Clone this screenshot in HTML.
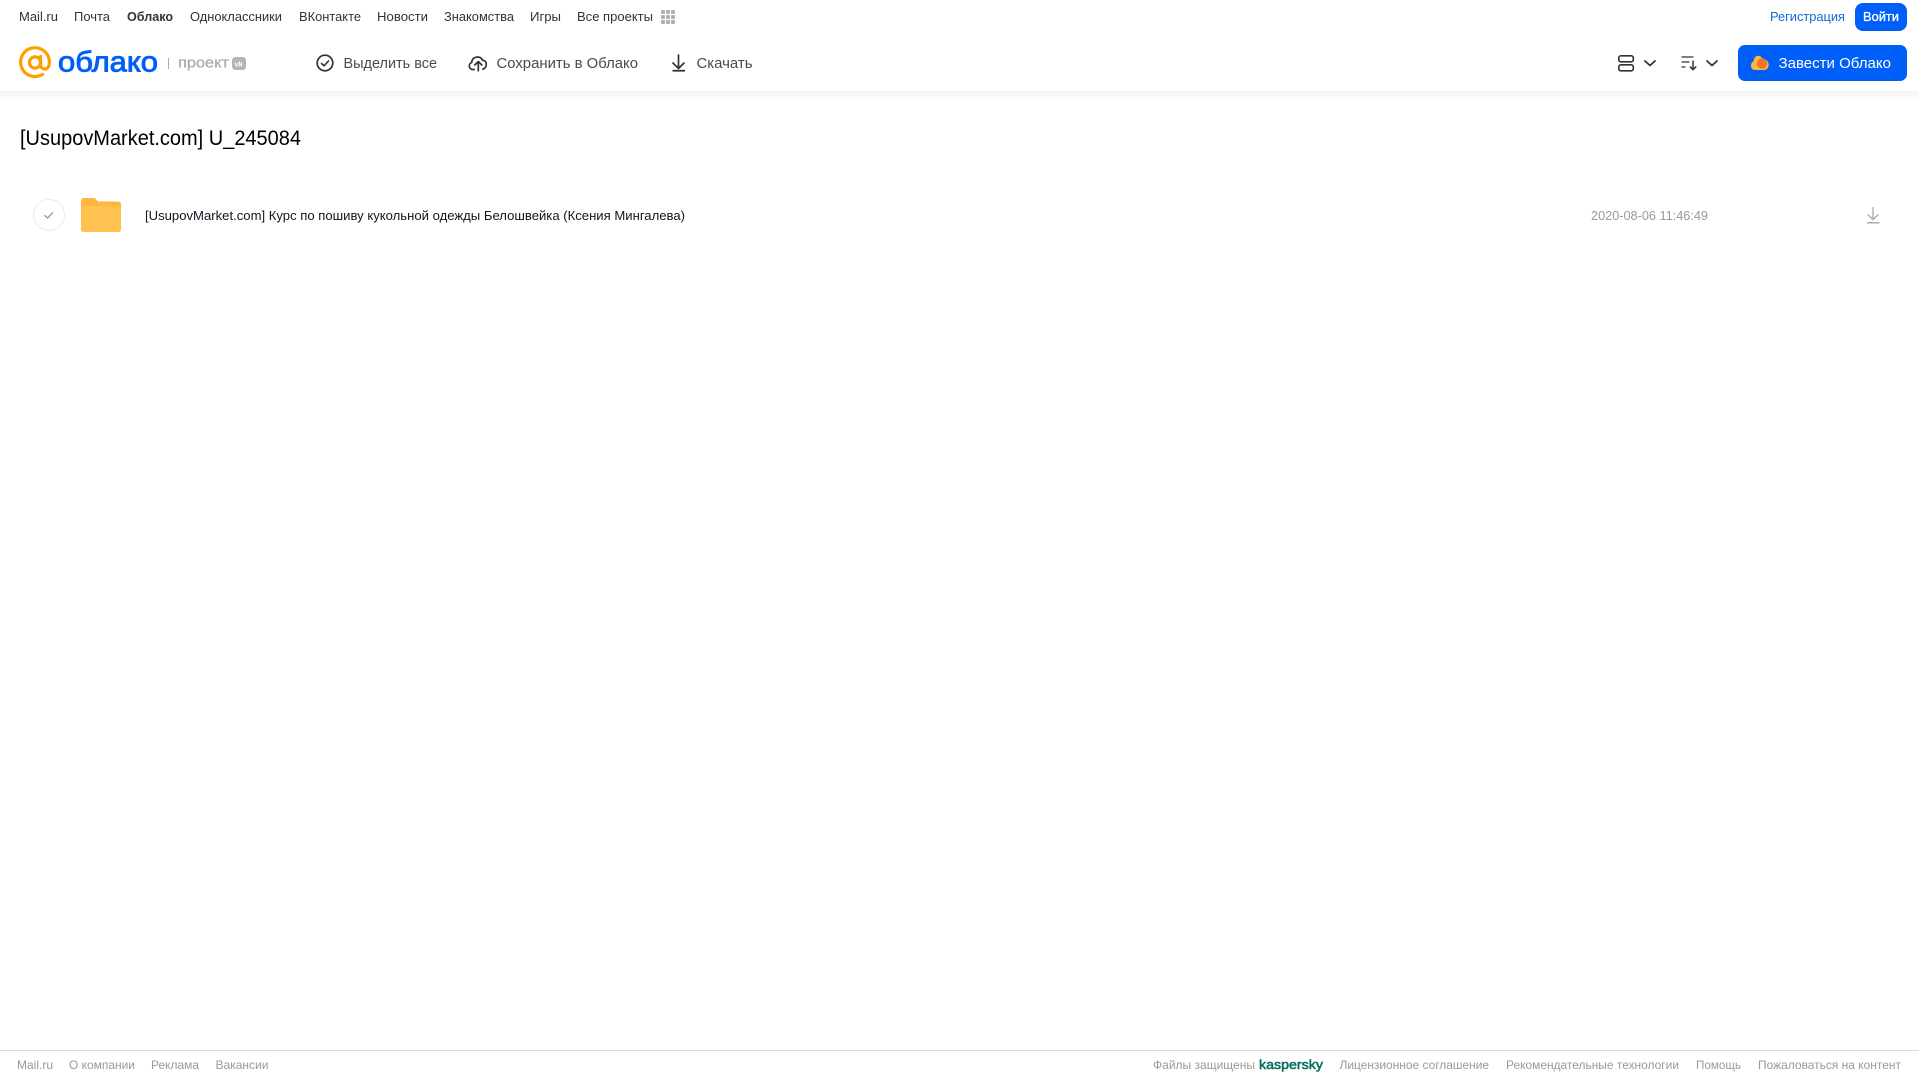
<!DOCTYPE html>
<html lang="ru"><head><meta charset="utf-8"><title>Облако</title>
<style>
html,body{margin:0;padding:0;background:#fff;width:1919px;height:1079px;overflow:hidden}
svg{display:block;font-family:"Liberation Sans",sans-serif}
.n{font-size:13px;fill:#333}
.t{font-size:14.5px;fill:#4a4a4a}
.f{font-size:12px;fill:#999}
</style></head><body>
<svg width="1919" height="1079" viewBox="0 0 1919 1079" xmlns="http://www.w3.org/2000/svg">
<defs><linearGradient id="s" x1="0" y1="0" x2="0" y2="1"><stop offset="0" stop-color="#f4f4f4"/><stop offset="1" stop-color="#fff"/></linearGradient></defs>
<rect x="0" y="91" width="1919" height="10" fill="url(#s)"/>

<!-- top nav -->
<text class="n" x="19" y="21" textLength="39" lengthAdjust="spacingAndGlyphs">Mail.ru</text>
<text class="n" x="74" y="21" textLength="36" lengthAdjust="spacingAndGlyphs">Почта</text>
<text class="n" x="127" y="21" textLength="46" lengthAdjust="spacingAndGlyphs" font-weight="700">Облако</text>
<text class="n" x="190" y="21" textLength="92" lengthAdjust="spacingAndGlyphs">Одноклассники</text>
<text class="n" x="299" y="21" textLength="62" lengthAdjust="spacingAndGlyphs">ВКонтакте</text>
<text class="n" x="377" y="21" textLength="51" lengthAdjust="spacingAndGlyphs">Новости</text>
<text class="n" x="444" y="21" textLength="70" lengthAdjust="spacingAndGlyphs">Знакомства</text>
<text class="n" x="530" y="21" textLength="31" lengthAdjust="spacingAndGlyphs">Игры</text>
<text class="n" x="577" y="21" textLength="76" lengthAdjust="spacingAndGlyphs">Все проекты</text>
<g fill="#b0b0b0">
<rect x="661" y="10" width="4" height="4" rx="1"/><rect x="666" y="10" width="4" height="4" rx="1"/><rect x="671" y="10" width="4" height="4" rx="1"/>
<rect x="661" y="15" width="4" height="4" rx="1"/><rect x="666" y="15" width="4" height="4" rx="1"/><rect x="671" y="15" width="4" height="4" rx="1"/>
<rect x="661" y="20" width="4" height="4" rx="1"/><rect x="666" y="20" width="4" height="4" rx="1"/><rect x="671" y="20" width="4" height="4" rx="1"/>
</g>
<text x="1770" y="21" font-size="13" fill="#0d6ad8" textLength="75" lengthAdjust="spacingAndGlyphs">Регистрация</text>
<rect x="1855" y="3" width="52" height="28" rx="8" fill="#005ff9"/>
<text x="1863" y="21" font-size="13" fill="#fff" stroke="#fff" stroke-width=".35" textLength="36" lengthAdjust="spacingAndGlyphs">Войти</text>

<!-- logo -->
<path d="M42.500 74.400A14.400 14.400 0 1 1 49.400 62C49.400 66.500 47.500 69 44.800 69C42 69 40.500 67 40.500 64.500V56.500" fill="none" stroke="#ff9e00" stroke-width="3.200" stroke-linecap="round"/>
<circle cx="35" cy="62.500" r="5.600" fill="none" stroke="#ff9e00" stroke-width="3.200"/>
<text x="58" y="71.500" font-size="29" fill="#005ff9" stroke="#005ff9" stroke-width=".9" textLength="100" lengthAdjust="spacingAndGlyphs">облако</text>
<rect x="168" y="58" width="1" height="11" fill="#aaa"/>
<text x="178" y="67.500" font-size="15" fill="#aeaeae" stroke="#aeaeae" stroke-width=".35" textLength="51" lengthAdjust="spacingAndGlyphs">проект</text>
<rect x="232" y="57" width="14" height="13" rx="3.500" fill="#b4b4b4"/>
<text x="234.500" y="66.500" font-size="7.500" font-weight="700" fill="#fff">vk</text>

<!-- toolbar -->
<circle cx="325" cy="63" r="7.800" fill="none" stroke="#333" stroke-width="1.700"/>
<path d="M321.500 63.500l2.500 2.300 4.500-4.800" fill="none" stroke="#333" stroke-width="1.600" stroke-linecap="round" stroke-linejoin="round"/>
<text class="t" x="343.500" y="68" textLength="93.500" lengthAdjust="spacingAndGlyphs">Выделить все</text>

<path d="M474.200 69.500h-1.500a3.600 3.600 0 0 1-1-7c.2-3 2-4.700 4-5.200 2.800-.8 5.500.2 7 3 2.400.1 3.600 1.800 3.600 3.800 0 2.400-1.400 4.300-3.500 5.200" fill="none" stroke="#333" stroke-width="1.700" stroke-linecap="round" stroke-linejoin="round"/>
<path d="M478.300 70.800V61.500M474.800 65l3.500-3.500 3.500 3.500" fill="none" stroke="#333" stroke-width="1.700" stroke-linecap="round" stroke-linejoin="round"/>
<text class="t" x="496.500" y="68" textLength="141.500" lengthAdjust="spacingAndGlyphs">Сохранить в Облако</text>

<path d="M678.500 55V68M673 63l5.500 5.500 5.500-5.500" fill="none" stroke="#333" stroke-width="1.700" stroke-linecap="round" stroke-linejoin="round"/>
<rect x="672.500" y="69.800" width="12.500" height="1.800" fill="#333"/>
<text class="t" x="696.500" y="68" textLength="56" lengthAdjust="spacingAndGlyphs">Скачать</text>

<!-- right toolbar -->
<rect x="1618.800" y="55.800" width="14.500" height="6" rx="2" fill="none" stroke="#333" stroke-width="1.600"/>
<rect x="1618.800" y="64.800" width="14.500" height="6" rx="2" fill="none" stroke="#333" stroke-width="1.600"/>
<path d="M1645 61l5 4.500 5-4.500" fill="none" stroke="#333" stroke-width="1.800" stroke-linecap="round" stroke-linejoin="round"/>
<path d="M1681.500 57h12M1681.500 62h8M1681.500 67h4" fill="none" stroke="#333" stroke-width="1.300"/>
<path d="M1693 60.500V69.500M1689.800 66.500l3.200 3.200 3.200-3.200" fill="none" stroke="#333" stroke-width="1.500" stroke-linejoin="round"/>
<path d="M1707 61l5 4.500 5-4.500" fill="none" stroke="#333" stroke-width="1.800" stroke-linecap="round" stroke-linejoin="round"/>

<rect x="1738" y="45" width="169" height="36" rx="7" fill="#005ff9"/>
<path d="M1755 70c-2.800 0-4-2.200-4-4.500 0-2 1.100-3.600 2.600-4.300.3-3.200 2-5.400 4.400-5.400 2.200 0 3.700 1.400 4.500 3.200 3.500-.2 6.200 2.600 6.200 5.600 0 3-2 5.400-4.500 5.400z" fill="#ffb53f"/>
<circle cx="1762" cy="63.500" r="5.200" fill="#f4742b"/>
<text x="1778.500" y="68" font-size="14.500" fill="#fff" textLength="112.500" lengthAdjust="spacingAndGlyphs">Завести Облако</text>

<!-- title -->
<text x="20" y="145" font-size="21" fill="#000" textLength="281" lengthAdjust="spacingAndGlyphs">[UsupovMarket.com] U_245084</text>

<!-- row -->
<circle cx="49" cy="215" r="15.500" fill="#fff" stroke="#ececec" stroke-width="1"/>
<path d="M44.800 215.500l2.800 2.500 5-5.300" fill="none" stroke="#999" stroke-width="1.300" stroke-linecap="round" stroke-linejoin="round"/>
<path d="M81 201a3 3 0 0 1 3-3h9.500c1.500 0 2.300.6 3 1.800.6 1 1.300 1.700 2.500 1.700H118a3 3 0 0 1 3 3v4.500H81z" fill="#ffb63e"/>
<rect x="81" y="206" width="40" height="26" rx="2.500" fill="#ffc14f"/>
<text x="145" y="220" font-size="13" fill="#1c1020" textLength="540" lengthAdjust="spacingAndGlyphs">[UsupovMarket.com] Курс по пошиву кукольной одежды Белошвейка (Ксения Мингалева)</text>
<text x="1591" y="220" font-size="12.500" fill="#999" textLength="117" lengthAdjust="spacingAndGlyphs">2020-08-06 11:46:49</text>
<path d="M1873 207V219.500M1867.800 214.500l5.200 5.200 5.200-5.200" fill="none" stroke="#aaa" stroke-width="1.300"/>
<rect x="1867" y="222" width="12.500" height="1.500" fill="#aaa"/>

<!-- footer -->
<rect x="0" y="1050" width="1919" height="1" fill="#d8d8d8"/>
<text class="f" x="17" y="1069" textLength="36" lengthAdjust="spacingAndGlyphs">Mail.ru</text>
<text class="f" x="69" y="1069" textLength="66" lengthAdjust="spacingAndGlyphs">О компании</text>
<text class="f" x="151" y="1069" textLength="48" lengthAdjust="spacingAndGlyphs">Реклама</text>
<text class="f" x="215.500" y="1069" textLength="53" lengthAdjust="spacingAndGlyphs">Вакансии</text>
<text class="f" x="1153" y="1069" textLength="102" lengthAdjust="spacingAndGlyphs">Файлы защищены</text>
<text x="1259" y="1069" font-size="13" fill="#006d5c" stroke="#006d5c" stroke-width=".5" textLength="64" lengthAdjust="spacingAndGlyphs">kaspersky</text>
<text class="f" x="1339.500" y="1069" textLength="149.500" lengthAdjust="spacingAndGlyphs">Лицензионное соглашение</text>
<text class="f" x="1506" y="1069" textLength="173" lengthAdjust="spacingAndGlyphs">Рекомендательные технологии</text>
<text class="f" x="1696" y="1069" textLength="45" lengthAdjust="spacingAndGlyphs">Помощь</text>
<text class="f" x="1758" y="1069" textLength="143" lengthAdjust="spacingAndGlyphs">Пожаловаться на контент</text>
</svg>
</body></html>
